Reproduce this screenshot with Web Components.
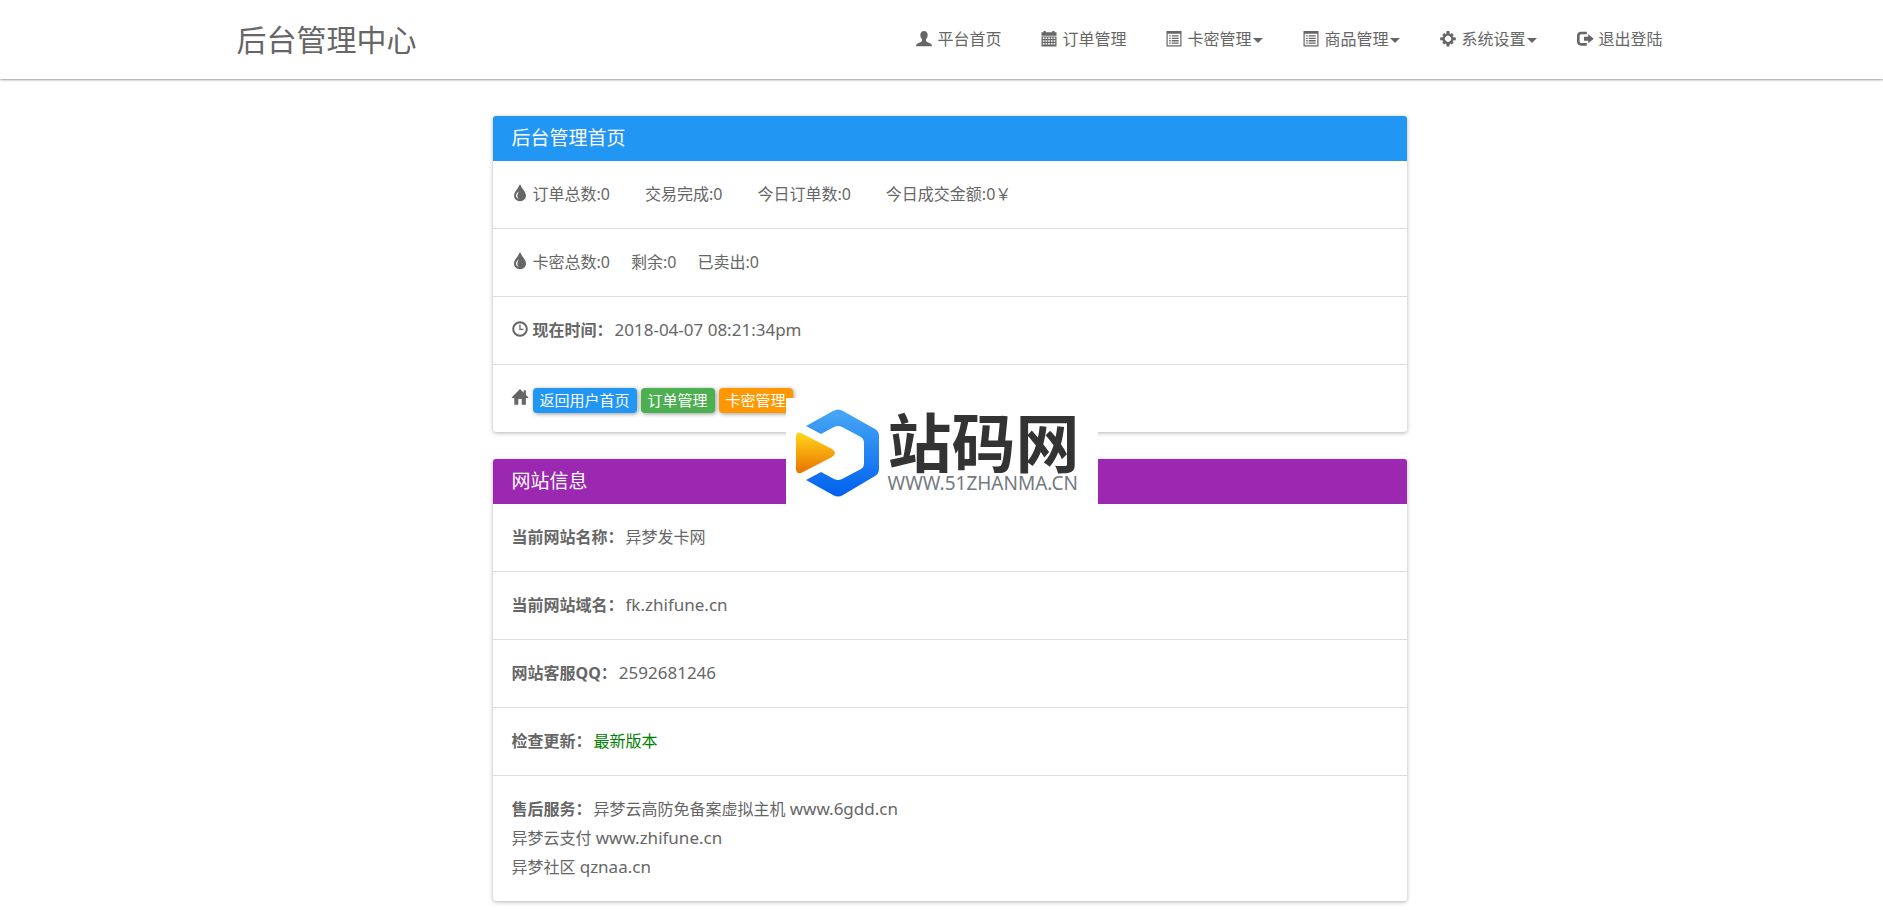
<!DOCTYPE html>
<html lang="zh-CN">
<head>
<meta charset="utf-8">
<meta name="viewport" content="width=device-width, initial-scale=1">
<title>后台管理中心</title>
<style>
  body {
    margin: 0;
    background: #fff;
    color: #666;
    font: 16px/29px "Noto Sans", "Noto Sans CJK SC", sans-serif;
  }
  main {
    box-sizing: border-box;
    max-width: 930px;
    margin: 0 auto;
    padding: 37px 0 8px 16px;
    display: grid;
    gap: 27px;
  }
  .host { font-size: 17px; line-height: 20px; }
  .current { color: green; }
</style>
</head>
<body>
<app-header>
  <nav-item icon="user">平台首页</nav-item>
  <nav-item icon="calendar">订单管理</nav-item>
  <nav-item icon="list" menu>卡密管理</nav-item>
  <nav-item icon="list" menu>商品管理</nav-item>
  <nav-item icon="cog" menu>系统设置</nav-item>
  <nav-item icon="logout">退出登陆</nav-item>
</app-header>

<main>
  <info-panel heading="后台管理首页" tone="primary">
    <info-row icon="tint">
      <stat-list wide><span>订单总数:0</span><span>交易完成:0</span><span>今日订单数:0</span><span>今日成交金额:0￥</span></stat-list>
    </info-row>
    <info-row icon="tint">
      <stat-list><span>卡密总数:0</span><span>剩余:0</span><span>已卖出:0</span></stat-list>
    </info-row>
    <info-row icon="time" label="现在时间：" latin>2018-04-07 08:21:34pm</info-row>
    <info-row icon="home">
      <button-row>
        <tag-link tone="primary">返回用户首页</tag-link>
        <tag-link tone="success">订单管理</tag-link>
        <tag-link tone="warning">卡密管理</tag-link>
      </button-row>
    </info-row>
  </info-panel>

  <info-panel heading="网站信息" tone="info">
    <info-row label="当前网站名称：">异梦发卡网</info-row>
    <info-row label="当前网站域名：" latin>fk.zhifune.cn</info-row>
    <info-row label="网站客服QQ：" latin>2592681246</info-row>
    <info-row label="检查更新："><span class="current">最新版本</span></info-row>
    <info-row label="售后服务：">异梦云高防免备案虚拟主机 <span class="host">www.6gdd.cn</span><br>异梦云支付 <span class="host">www.zhifune.cn</span><br>异梦社区 <span class="host">qznaa.cn</span></info-row>
  </info-panel>
</main>

<site-mark></site-mark>

<script>
const ICONS = {
  user: '<path d="M8 0C5.700 0 4.300 1.700 4.300 4c0 1.700.6 3.200 1.700 4.200v1.300c0 .7-.4 1.100-1.100 1.500L1.600 12.600C.6 13.100.2 13.700.2 14.700V15.300h15.600v-.6c0-1-.4-1.600-1.400-2.100L11.100 11C10.400 10.600 10 10.200 10 9.500V8.200C11.100 7.200 11.700 5.700 11.700 4 11.700 1.700 10.300 0 8 0z"/>',
  calendar: '<path fill-rule="evenodd" d="M.5 1.300h2V0h2.300v1.300h6.400V0h2.300v1.300h2V4.800H.5zM.5 5.600h15v9.900H.5zM1.800 6.600v1.500h1.700V6.600zm2.700 0v1.500h1.700V6.600zm2.700 0v1.500h1.700V6.600zm2.700 0v1.500h1.700V6.600zm2.700 0v1.500h1.700V6.600zM1.800 9.200v1.500h1.700V9.200zm2.700 0v1.500h1.700V9.200zm2.700 0v1.500h1.700V9.200zm2.700 0v1.500h1.700V9.200zm2.700 0v1.500h1.700V9.200zM1.800 11.900v1.500h1.700v-1.500zm2.700 0v1.500h1.700v-1.500zm2.700 0v1.500h1.700v-1.500zm2.700 0v1.500h1.700v-1.500zm2.700 0v1.500h1.700v-1.500z"/>',
  list: '<path fill-rule="evenodd" d="M.5 0h15v15.500H.5zM1.700 2.800v11.500h12.600V2.800z"/><path d="M3.200 4.300h1.500v1.300H3.200zM5.700 4.300h7v1.300h-7zM3.200 6.700h1.500V8H3.200zM5.700 6.700h7V8h-7zM3.200 9.100h1.500v1.300H3.200zM5.700 9.100h7v1.300h-7zM3.200 11.500h1.500v1.300H3.200zM5.700 11.500h7v1.300h-7z"/>',
  cog: '<path d="M6.600 0h2.800l.4 3.500H6.200zM6.600 15.600h2.800l.4-3.500H6.200zM.2 6.400v2.800l3.500.4V6zM15.800 6.400v2.800l-3.500.4V6zM2.300 4.100 4.300 2.100 7 4.300 4.500 6.800zM11.700 2.100l2 2L11.500 6.800 9 4.300zM13.700 11.500l-2 2L9 11.300l2.500-2.500zM4.300 13.500l-2-2 2.200-2.700L7 11.300z"/><circle cx="8" cy="7.800" r="4.300" fill="none" stroke="currentColor" stroke-width="2.200"/>',
  logout: '<path fill="none" stroke="currentColor" stroke-width="2.600" d="M9.800 2H4.200C2.400 2 1.300 3 1.300 4.800v5.800c0 1.800 1.100 2.800 2.900 2.800h5.600"/><path d="M11.200 3.200 16.800 7.700l-5.600 4.500V9.700H7V5.700h4.200z"/>',
  tint: '<path fill-rule="evenodd" d="M7.500-.3C7 2.400 2 6.800 2 10.600c0 3.200 2.500 5.600 6 5.600s6-2.400 6-5.600C14 6.800 9 2.400 8.500-.3zM6.700 6.300C6 8.300 5.200 9.600 5.400 11.400c.1 1.100.8 2 1.700 2.500C5.300 13.600 4 12.400 4 10.600 4 9 5.500 7.500 6.700 6.300z"/>',
  time: '<circle cx="8" cy="8" r="6.800" fill="none" stroke="currentColor" stroke-width="2"/><path d="M7.300 3.500h1.300v4.300h2.900v1.300H7.300z"/>',
  home: '<path d="M8 0l3.700 3.700V1.300h2.200v4.600L16.600 8.400l-.7.700h-2v6.600H9.700V10H6.300v5.700h-4V9.100h-2l-.7-.7z"/>'
};

function define(name, render) {
  customElements.define(name, class extends HTMLElement {
    connectedCallback() {
      if (this.shadowRoot) return;
      const template = document.createElement('template');
      template.innerHTML = render(this);
      this.attachShadow({ mode: 'open' }).append(template.content.cloneNode(true));
    }
  });
}

define('glyph-icon', el => `
  <style>
    :host { display: block; flex: none; width: 16px; height: 16px; }
    svg { display: block; overflow: visible; }
  </style>
  <svg width="16" height="16" viewBox="0 0 16 16" fill="currentColor" aria-hidden="true">${ICONS[el.getAttribute('name')]}</svg>`);

define('app-header', () => `
  <style>
    :host { display: block; padding-left: 16px; background: #fff; box-shadow: 0 1px 2px rgba(0,0,0,.4); }
    .bar { display: flex; justify-content: space-between; align-items: center; max-width: 1426px; height: 79px; margin: 0 auto; }
    .brand { color: inherit; font-size: 30px; line-height: 40px; text-decoration: none; white-space: nowrap; }
    nav { display: flex; gap: 40px; padding-bottom: 2px; }
  </style>
  <div class="bar">
    <a class="brand" href="#">后台管理中心</a>
    <nav><slot></slot></nav>
  </div>`);

define('nav-item', el => `
  <style>
    :host { display: block; }
    a { display: flex; align-items: center; gap: 4px; color: inherit; text-decoration: none; white-space: nowrap; line-height: 24px; }
    glyph-icon { width: 17px; }
    .menu::after { content: ""; display: inline-block; vertical-align: middle; margin-left: 2px; border: 5px solid transparent; border-top-color: currentColor; border-bottom: 0; }
  </style>
  <a href="#"><glyph-icon name="${el.getAttribute('icon')}"></glyph-icon><span class="${el.hasAttribute('menu') ? 'menu' : ''}"><slot></slot></span></a>`);

const TONES = { primary: '#2196f3', success: '#4caf50', warning: '#ff9800', info: '#9c27b0' };

define('info-panel', el => `
  <style>
    :host { display: block; border-radius: 3px; background: #fff; box-shadow: 0 1px 4px rgba(0,0,0,.3); }
    h2 { margin: 0; padding: 8px 19px; border-radius: 3px 3px 0 0; background: ${TONES[el.getAttribute('tone')]}; color: #fff; font-size: 19px; line-height: 29px; font-weight: 400; }
  </style>
  <h2>${el.getAttribute('heading')}</h2>
  <slot></slot>`);

define('info-row', el => {
  const icon = el.getAttribute('icon');
  const label = el.getAttribute('label');
  return `
  <style>
    :host { display: flex; gap: 5px; padding: 19px; border-bottom: 1px solid #ddd; }
    :host(:last-child) { border-bottom: 0; }
    glyph-icon { margin-top: 5px; }
    b { margin-right: 2px; font-weight: 700; }
    .latin { font-size: 17px; line-height: 20px; }
  </style>
  ${icon ? `<glyph-icon name="${icon}"></glyph-icon>` : ''}
  <div>${label ? `<b>${label}</b>` : ''}<span class="${el.hasAttribute('latin') ? 'latin' : ''}"><slot></slot></span></div>`;
});

define('stat-list', el => `
  <style>
    :host { display: flex; gap: ${el.hasAttribute('wide') ? 35 : 21}px; }
  </style>
  <slot></slot>`);

define('button-row', () => `
  <style>
    :host { display: flex; gap: 4px; padding-top: 4px; height: 25px; }
  </style>
  <slot></slot>`);

define('tag-link', el => `
  <style>
    :host { display: block; }
    a { display: block; padding: 0 7px; border-radius: 4px; background: ${TONES[el.getAttribute('tone')]}; box-shadow: 1px 1px 4px rgba(0,0,0,.4); color: #fff; font-size: 15px; line-height: 25px; text-decoration: none; white-space: nowrap; }
  </style>
  <a href="#"><slot></slot></a>`);

define('site-mark', () => `
  <style>
    :host { position: fixed; inset: 0; margin: auto; box-sizing: border-box; width: 312px; height: 114px; padding: 11px 10px 0; display: flex; gap: 8px; background: #fff; }
    svg { flex: none; }
    .name { color: #333; font-size: 64px; line-height: 68px; font-weight: 700; white-space: nowrap; }
    .url { color: #757a80; font-size: 19px; line-height: 12px; white-space: nowrap; }
  </style>
  <svg width="84" height="88" viewBox="0 0 84 88" aria-hidden="true">
    <defs>
      <linearGradient id="ring" x1="0" y1="0" x2="0" y2="1"><stop offset="0" stop-color="#48a8f5"/><stop offset="1" stop-color="#0060ee"/></linearGradient>
      <linearGradient id="play" x1="0" y1="0" x2="0" y2="1"><stop offset="0" stop-color="#ffd81a"/><stop offset="1" stop-color="#ea7200"/></linearGradient>
    </defs>
    <path fill="url(#ring)" d="M10 17 37 2Q42-1 47 2L79 20Q83 22 83 27V60Q83 65 79 67L47 86Q42 89 37 86L10 71 25 63 38 70Q42 72 46 70L65 60Q68 58 68 55V33Q68 30 65 28L46 18Q42 16 38 18L25 25z"/>
    <path fill="url(#play)" d="M0 28Q0 22 5 24L36 40Q42 44 36 48L5 64Q0 65 0 60z"/>
  </svg>
  <div><div class="name">站码网</div><div class="url">WWW.51ZHANMA.CN</div></div>`);
</script>
</body>
</html>
